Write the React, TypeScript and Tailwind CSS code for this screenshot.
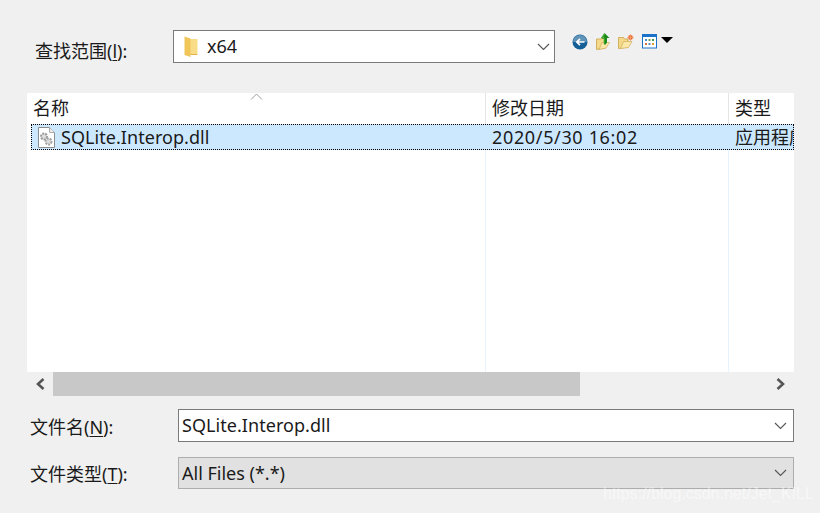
const FONT = "font-['Noto_Sans','Noto_Sans_CJK_SC',sans-serif]";

function Chevron() {
  return (
    <svg width="13" height="8" viewBox="0 0 13 8" fill="none">
      <path d="M1 1l5.5 5.5L12 1" stroke="#555" strokeWidth="1.1" />
    </svg>
  );
}

function FolderIcon() {
  return (
    <svg width="15" height="22" viewBox="0 0 15 22">
      <path d="M4 3h9.5v15H4z" fill="#f9dc88" />
      <path d="M0.5 0.5l6 2v18.5l-6-2z" fill="#f0c659" />
      <path d="M6.5 18h7v1H6.5z" fill="#e2b04a" />
    </svg>
  );
}

function FileIcon() {
  return (
    <svg width="19" height="23" viewBox="0 0 19 23" className="shrink-0">
      <path d="M1.5 1.5h11l5 5v15h-16z" fill="#fff" stroke="#8d8d8d" />
      <path d="M12.5 1.5v5h5" fill="#eee" stroke="#aaa" />
      <circle cx="7" cy="10.5" r="3" fill="#ddd" stroke="#999" strokeWidth="2" strokeDasharray="2 1" />
      <circle cx="11.5" cy="15.5" r="3" fill="#ddd" stroke="#a4a4a4" strokeWidth="2" strokeDasharray="2 1" />
    </svg>
  );
}

function BackIcon() {
  return (
    <svg width="16" height="16" viewBox="0 0 16 16">
      <circle cx="8" cy="8" r="7.5" fill="#145f97" />
      <path d="M1 8a7 7 0 0 1 14 0z" fill="#5f93b8" />
      <path d="M12.5 8H5M8 4.8L4.8 8 8 11.2" stroke="#fff" strokeWidth="1.7" fill="none" />
    </svg>
  );
}

function UpFolderIcon() {
  return (
    <svg width="14" height="17" viewBox="0 0 14 17">
      <path d="M0.5 6l5 0v-0.5h4V15l-9 1.5z" fill="#f5d98a" stroke="#c9a24a" strokeWidth="0.8" />
      <path d="M3 16.5l3-7h7.5l-3.5 5.5z" fill="#fbe7a8" stroke="#c9a24a" strokeWidth="0.6" />
      <path d="M8.5 0l5 5H11v4.5l-2 2.5-1-1V6L5 5z" fill="#1a8a1a" />
      <path d="M8.5 1L6.5 4.5h1.5v6" fill="none" stroke="#62c040" strokeWidth="0.8" />
    </svg>
  );
}

function NewFolderIcon() {
  return (
    <svg width="16" height="15" viewBox="0 0 16 15">
      <path d="M0.5 3.5h5l1 1.5H10V13l-9.5 1.5z" fill="#f5d98a" stroke="#c9a24a" strokeWidth="0.8" />
      <path d="M2.5 14.5l3-7H14l-3.5 6z" fill="#fbe7a8" stroke="#c9a24a" strokeWidth="0.6" />
      <circle cx="12.5" cy="3.5" r="2.4" fill="#ee6a2c" />
      <path d="M12.5 0v7M9 3.5h7" stroke="#f3a070" strokeWidth="0.8" />
    </svg>
  );
}

function ViewIcon() {
  return (
    <svg width="15" height="15" viewBox="0 0 15 15">
      <rect x="0.5" y="0.5" width="14" height="13.5" fill="#fff" stroke="#1a73c8" />
      <rect x="0.5" y="0.5" width="14" height="2.5" fill="#1a73c8" />
      <rect x="3" y="5" width="2" height="2" fill="#4a90d0" />
      <rect x="6.5" y="5" width="2" height="2" fill="#7a9a50" />
      <rect x="10" y="5" width="2" height="2" fill="#3a9a50" />
      <rect x="3" y="9" width="2" height="2" fill="#d97040" />
      <rect x="6.5" y="9" width="2" height="2" fill="#5a8ac0" />
      <rect x="10" y="9" width="2" height="2" fill="#d9a030" />
    </svg>
  );
}

function FieldRow({ label, hotkey, children }: { label: string; hotkey: string; children: React.ReactNode }) {
  return (
    <div className="flex items-center">
      <span className="mt-[2px] w-[151px] shrink-0 pl-[3px] text-[18px] leading-none text-[#1a1a1a]">
        {label}(<span className="underline underline-offset-2">{hotkey}</span>):
      </span>
      {children}
    </div>
  );
}

export default function App() {
  return (
    <div className={`${FONT} relative flex h-[513px] w-[820px] flex-col overflow-hidden bg-[#f0f0f0] pl-[27px] pr-[26px] pt-[30px] text-[#1a1a1a]`}>
      {/* look in */}
      <div className="flex h-[33px] items-start">
        <span className="mt-[9px] w-[146px] shrink-0 pl-[8px] text-[18px] leading-[24px]">
          查找范围(<span className="underline underline-offset-2">l</span>):
        </span>
        <div className="flex h-[33px] w-[382px] items-center border border-[#7a7a7a] bg-white pl-[10px] pr-[3px]">
          <FolderIcon />
          <span className="ml-[8px] flex-1 text-[18px]">x64</span>
          <span className="mr-[1px] flex"><Chevron /></span>
        </div>
        <div className="ml-[17px] mt-[3px] flex items-center">
          <BackIcon />
          <span className="ml-[8px] flex"><UpFolderIcon /></span>
          <span className="ml-[8px] flex"><NewFolderIcon /></span>
          <span className="ml-[8px] flex"><ViewIcon /></span>
          <span className="mb-[3px] ml-[4px] h-0 w-0 border-x-[6px] border-t-[6px] border-x-transparent border-t-black" />
        </div>
      </div>

      {/* file list */}
      <div className="mt-[30px] flex h-[279px] flex-col bg-white">
        <div className="relative flex h-[31px] shrink-0 text-[18px] leading-[31px]">
          <svg width="13" height="7" viewBox="0 0 13 7" className="absolute left-[223px] top-0" fill="none">
            <path d="M1 6.5l5.500-5.500L12 6.500" stroke="#9a9a9a" />
          </svg>
          <div className="w-[459px] border-r border-[#e5e5e5] pl-[6px]">名称</div>
          <div className="w-[243px] border-r border-[#e5e5e5] pl-[6px]">修改日期</div>
          <div className="flex-1 pl-[6px]">类型</div>
        </div>
        <div className="ml-[4px] flex h-[26px] shrink-0 items-center overflow-hidden whitespace-nowrap border border-dotted border-black bg-[#cce8ff] text-[18px]">
          <div className="flex w-[454px] shrink-0 items-center pl-[5px]">
            <FileIcon />
            <span className="ml-[5px] tracking-[0.05px]">SQLite.Interop.dll</span>
          </div>
          <div className="w-[243px] shrink-0 pl-[6px] tracking-[0.65px]">2020/5/30 16:02</div>
          <div className="shrink-0 pl-[6px]">应用程序扩展</div>
        </div>
        <div className="flex flex-1">
          <div className="w-[459px] border-r border-[#e8f2fb]" />
          <div className="w-[243px] border-r border-[#e8f2fb]" />
        </div>
      </div>

      {/* horizontal scrollbar */}
      <div className="flex h-[24px] items-center">
        <svg width="26" height="24" viewBox="0 0 26 24" className="shrink-0" fill="none">
          <path d="M16.500 7L11 12l5.500 5" stroke="#555" strokeWidth="2.6" />
        </svg>
        <div className="h-[24px] w-[527px] bg-[#c8c8c8]" />
        <div className="flex-1" />
        <svg width="26" height="24" viewBox="0 0 26 24" className="shrink-0" fill="none">
          <path d="M9.500 7l5.500 5-5.500 5" stroke="#555" strokeWidth="2.6" />
        </svg>
      </div>

      {/* file name + type */}
      <div className="mt-[13px] flex flex-col gap-[15px]">
        <FieldRow label="文件名" hotkey="N">
          <div className="flex h-[33px] flex-1 items-center justify-between border border-[#7a7a7a] bg-white pl-[3px] pr-[6px] text-[18px]">
            <span className="tracking-[0.05px]">SQLite.Interop.dll</span>
            <Chevron />
          </div>
        </FieldRow>
        <FieldRow label="文件类型" hotkey="T">
          <div className="flex h-[32px] flex-1 items-center justify-between border border-[#adadad] bg-[#e1e1e1] pl-[3px] pr-[6px] text-[18px]">
            <span>All Files (*.*)</span>
            <Chevron />
          </div>
        </FieldRow>
      </div>

      {/* csdn watermark */}
      <span className="absolute left-[603px] top-[484px] font-['Liberation_Sans',sans-serif] text-[16px] leading-[20px] text-white/50">
        https://blog.csdn.net/Jet_KILL
      </span>
    </div>
  );
}
